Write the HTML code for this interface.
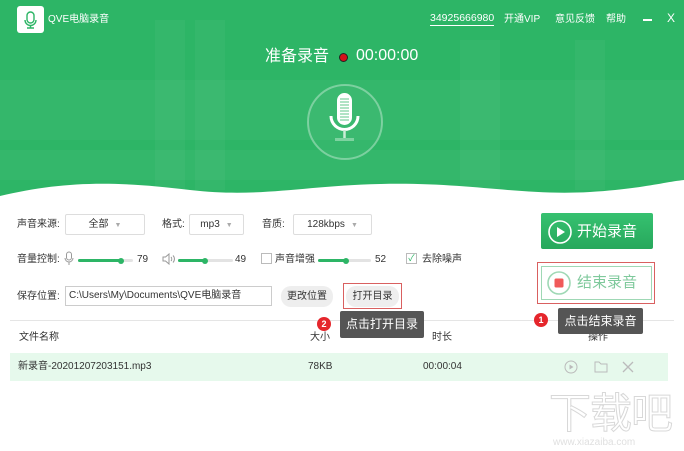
<!DOCTYPE html>
<html><head><meta charset="utf-8"><style>
*{margin:0;padding:0;box-sizing:border-box}
body{width:684px;height:451px;overflow:hidden;background:#fff;font-family:"Liberation Sans","Noto Sans CJK SC",sans-serif;font-size:10px;color:#333;position:relative}
.a{position:absolute;white-space:nowrap;line-height:14px}
.hdr{position:absolute;left:0;top:0;width:684px;height:200px;background:#2db566;overflow:hidden}
.sq{position:absolute;background:rgba(255,255,255,0.035)}
.sel{position:absolute;border:1px solid #ddd;border-radius:2px;height:21px;background:#fff;font-size:10px;line-height:19px;text-align:center;color:#333}
.sel i{font-style:normal;color:#aaa;font-size:7px;margin-left:6px}
.tr{position:absolute;height:3px;background:#e3e3e3;border-radius:2px}
.tr b{position:absolute;left:0;top:0;height:3px;background:#2db566;border-radius:2px}
.tr s{position:absolute;top:-1.5px;width:6px;height:6px;border-radius:50%;background:#2db566}
.cb{position:absolute;width:11px;height:11px;border:1px solid #bbb;background:#fff}
.btn{position:absolute;background:#eee;border-radius:10px;height:21px;line-height:21px;text-align:center;font-size:10px}
.tip{position:absolute;background:#555;color:#fff;font-size:12px;border-radius:2px;text-align:center}
.badge{position:absolute;width:14px;height:14px;border-radius:50%;background:#e5262c;color:#fff;font-size:9px;line-height:14px;text-align:center;font-weight:bold}
</style></head><body>
<div class="hdr">
<div class="sq" style="left:0;top:80px;width:684px;height:60px"></div>
<div class="sq" style="left:155px;top:20px;width:30px;height:170px"></div>
<div class="sq" style="left:195px;top:20px;width:30px;height:170px"></div>
<div class="sq" style="left:460px;top:40px;width:40px;height:150px"></div>
<div class="sq" style="left:575px;top:40px;width:30px;height:150px"></div>
<div class="sq" style="left:0;top:150px;width:684px;height:30px"></div>
<svg style="position:absolute;left:0;top:0" width="684" height="200"><path d="M0 196 C60 182 110 180 190 190 C260 198 300 186 380 184 C470 182 520 196 590 192 C640 189 665 182 684 180 L684 200 L0 200Z" fill="#fff"/></svg>
</div>
<div class="a" style="left:17px;top:6px;width:27px;height:27px;background:#fff;border-radius:3px"></div>
<svg class="a" style="left:17px;top:6px" width="27" height="27"><rect x="10" y="6" width="7" height="11" rx="3.5" fill="none" stroke="#2db566" stroke-width="1.4"/><path d="M8 14 a5.5 5.5 0 0 0 11 0 M13.5 19.5 V22 M10 22 H17" fill="none" stroke="#2db566" stroke-width="1.4"/></svg>
<div class="a" style="left:48px;top:13px;color:#fff;font-size:10px">QVE电脑录音</div>
<div class="a" style="left:430px;top:12px;color:#fff;font-size:10.5px;border-bottom:1px solid #fff;line-height:13px">34925666980</div>
<div class="a" style="left:504px;top:13px;color:#fff;font-size:10px">开通VIP</div>
<div class="a" style="left:555px;top:13px;color:#fff;font-size:10px">意见反馈</div>
<div class="a" style="left:606px;top:13px;color:#fff;font-size:10px">帮助</div>
<div class="a" style="left:643px;top:19px;width:9px;height:1.5px;background:#fff"></div>
<div class="a" style="left:667px;top:11px;color:#fff;font-size:12px">X</div>
<div class="a" style="left:265px;top:47px;color:#fff;font-size:16px;line-height:20px">准备录音</div>
<div class="a" style="left:339px;top:53px;width:9px;height:9px;border-radius:50%;background:#d4101a;border:1.5px solid #222"></div>
<div class="a" style="left:356px;top:46px;color:#fff;font-size:16px;line-height:20px">00:00:00</div>
<svg class="a" style="left:300px;top:80px" width="90" height="90"><circle cx="45" cy="42" r="37" fill="rgba(255,255,255,0.04)" stroke="rgba(255,255,255,0.35)" stroke-width="2"/><rect x="37" y="13" width="15" height="32" rx="7.5" fill="#fff"/><g stroke="#2db566" stroke-width="0.8"><path d="M40 19H49M40 22H49M40 25H49M40 28H49M40 31H49M40 34H49M40 37H49M40 40H49"/></g><path d="M31 36 a13.5 13.5 0 0 0 27 0" fill="none" stroke="#fff" stroke-width="3"/><path d="M44.5 50V59" stroke="#c9ecd6" stroke-width="2.5"/><rect x="35" y="58" width="19" height="3" fill="#7dd3a0"/></svg>

<div class="a" style="left:17px;top:218px">声音来源:</div>
<div class="sel" style="left:65px;top:214px;width:80px">全部<i>▼</i></div>
<div class="a" style="left:162px;top:218px">格式:</div>
<div class="sel" style="left:189px;top:214px;width:55px">mp3<i>▼</i></div>
<div class="a" style="left:262px;top:218px">音质:</div>
<div class="sel" style="left:293px;top:214px;width:79px">128kbps<i>▼</i></div>

<div class="a" style="left:17px;top:253px">音量控制:</div>
<svg class="a" style="left:63px;top:251px" width="12" height="16"><rect x="3.5" y="1" width="5" height="8" rx="2.5" fill="none" stroke="#999"/><path d="M2 7a4 4 0 0 0 8 0M6 11V14" fill="none" stroke="#999"/></svg>
<div class="tr" style="left:78px;top:259px;width:55px"><b style="width:43px"></b><s style="left:40px"></s></div>
<div class="a" style="left:137px;top:253px">79</div>
<svg class="a" style="left:162px;top:253px" width="14" height="12"><path d="M1 4H3.5L7 1V11L3.5 8H1Z" fill="none" stroke="#999"/><path d="M9 4a3 3 0 0 1 0 4M11 2.5a5 5 0 0 1 0 7" fill="none" stroke="#999"/></svg>
<div class="tr" style="left:178px;top:259px;width:55px"><b style="width:27px"></b><s style="left:24px"></s></div>
<div class="a" style="left:235px;top:253px">49</div>
<div class="cb" style="left:261px;top:253px"></div>
<div class="a" style="left:275px;top:253px">声音增强</div>
<div class="tr" style="left:318px;top:259px;width:53px"><b style="width:28px"></b><s style="left:25px"></s></div>
<div class="a" style="left:375px;top:253px">52</div>
<div class="cb" style="left:406px;top:253px;color:#2db566;font-size:9px;line-height:9px;text-align:center">✓</div>
<div class="a" style="left:422px;top:253px">去除噪声</div>

<div class="a" style="left:17px;top:290px">保存位置:</div>
<div class="a" style="left:65px;top:286px;width:207px;height:20px;border:1px solid #ccc;line-height:18px;padding-left:3px;font-size:10px">C:\Users\My\Documents\QVE电脑录音</div>
<div class="btn" style="left:281px;top:286px;width:52px">更改位置</div>
<div class="a" style="left:343px;top:283px;width:59px;height:26px;border:1px solid #d96060"></div>
<div class="btn" style="left:346px;top:286px;width:53px">打开目录</div>

<div class="a" style="left:541px;top:213px;width:112px;height:36px;background:linear-gradient(#36c170,#27a85c);border-radius:2px"></div>
<svg class="a" style="left:547px;top:219px" width="26" height="26"><circle cx="13" cy="13" r="11" fill="none" stroke="#fff" stroke-width="1.6"/><path d="M10 8L18 13L10 18Z" fill="#fff"/></svg>
<div class="a" style="left:577px;top:222px;color:#fff;font-size:15px;line-height:20px">开始录音</div>
<div class="a" style="left:537px;top:262px;width:118px;height:42px;border:1px solid #d96060"></div>
<div class="a" style="left:541px;top:266px;width:111px;height:34px;border:1px solid #9fd8b5;background:#fff"></div>
<svg class="a" style="left:546px;top:270px" width="26" height="26"><circle cx="13" cy="13" r="11" fill="none" stroke="#9fd8b5" stroke-width="1.6"/><rect x="8.5" y="8.5" width="9" height="9" rx="1.5" fill="#f05a5a"/></svg>
<div class="a" style="left:577px;top:273px;color:#7fc99c;font-size:15px;line-height:20px">结束录音</div>

<div class="a" style="left:10px;top:320px;width:664px;height:1px;background:#e5e5e5"></div>
<div class="a" style="left:19px;top:331px">文件名称</div>
<div class="a" style="left:310px;top:331px">大小</div>
<div class="a" style="left:432px;top:331px">时长</div>
<div class="a" style="left:588px;top:331px">操作</div>
<div class="a" style="left:10px;top:353px;width:658px;height:28px;background:#e6f9ec"></div>
<div class="a" style="left:18px;top:360px">新录音-20201207203151.mp3</div>
<div class="a" style="left:308px;top:360px">78KB</div>
<div class="a" style="left:423px;top:360px">00:00:04</div>
<svg class="a" style="left:562px;top:358px" width="75" height="18"><circle cx="9" cy="9" r="6" fill="none" stroke="#bbb"/><path d="M7.5 6.5L11.5 9L7.5 11.5Z" fill="#bbb"/><path d="M33 4H37L39 6H45V14H33Z" fill="none" stroke="#bbb"/><path d="M61 4L71 14M71 4L61 14" stroke="#bbb" stroke-width="1.3"/></svg>

<div class="tip" style="left:340px;top:311px;width:84px;height:27px;line-height:27px">点击打开目录</div>
<div class="badge" style="left:317px;top:317px">2</div>
<div class="tip" style="left:558px;top:308px;width:85px;height:26px;line-height:26px">点击结束录音</div>
<div class="badge" style="left:534px;top:313px">1</div>
<div class="a" style="left:549px;top:390px;font-size:42px;line-height:48px;color:#fff;-webkit-text-stroke:1px #d8d8d8;letter-spacing:-1px">下载吧</div>
<div class="a" style="left:553px;top:437px;font-size:10px;line-height:12px;color:#e0e0e0">www.xiazaiba.com</div>
</body></html>
